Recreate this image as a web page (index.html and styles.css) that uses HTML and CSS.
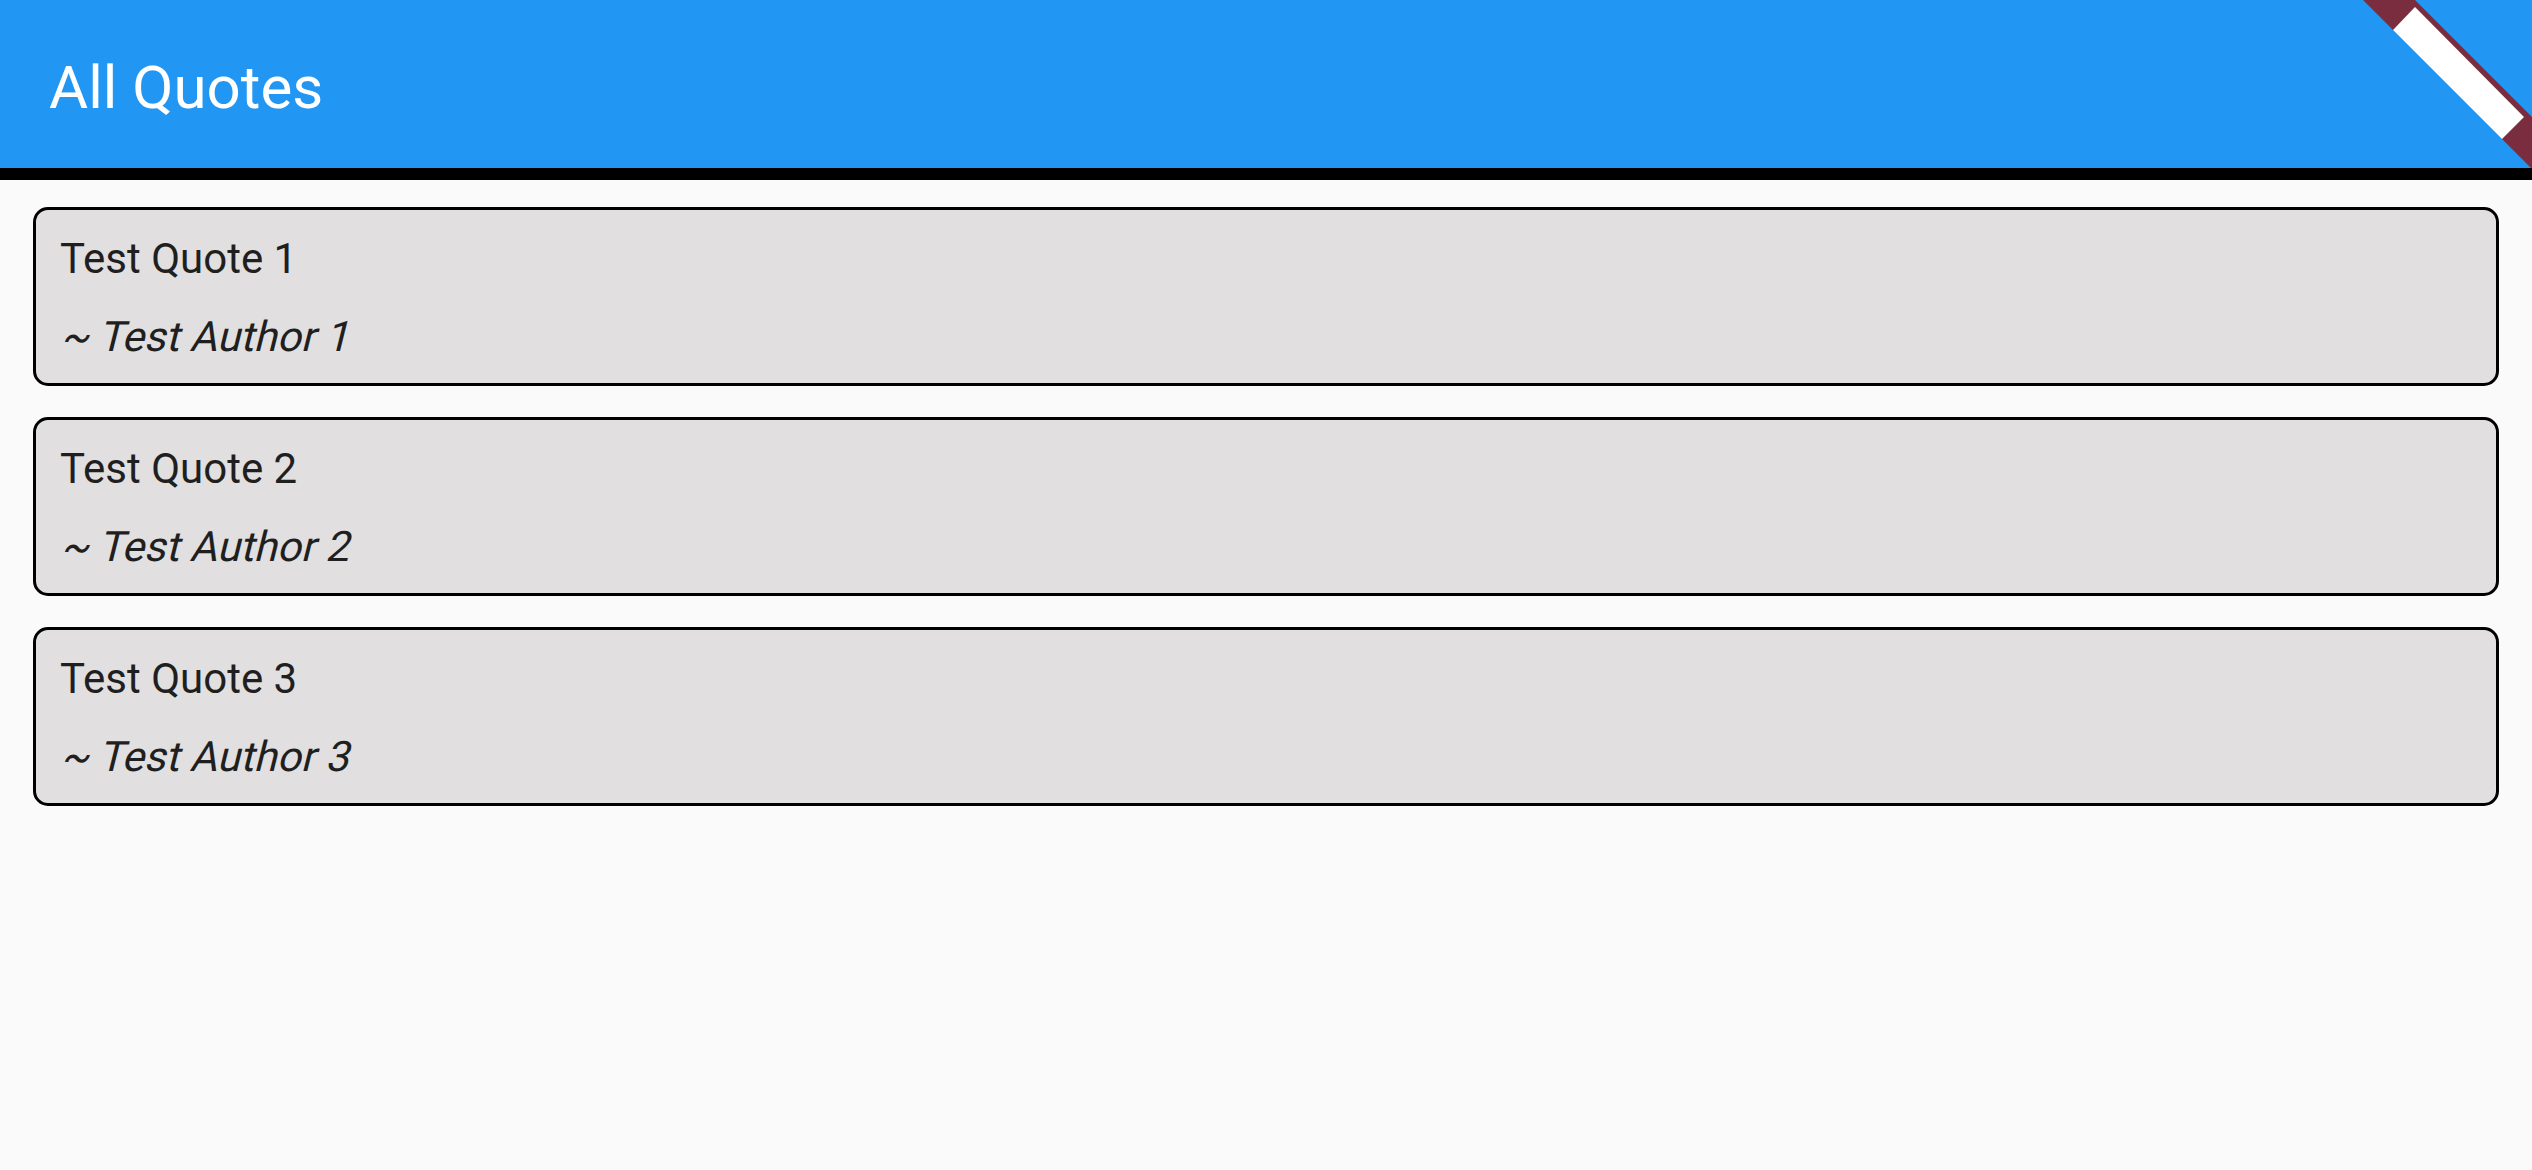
FILE: index.html
```html
<!DOCTYPE html>
<html lang="en">
<head>
<meta charset="utf-8">
<title>All Quotes</title>
<link rel="stylesheet" href="styles.css">
</head>
<body>
<header class="appbar">
  <h1 class="appbar-title">All Quotes</h1>
  <svg class="debug-banner" width="169" height="168" viewBox="0 0 169 168" aria-hidden="true">
    <polygon points="0,0 52,0 169,117 169,168 168,168" fill="#7B2D40"/>
    <polygon points="52,7 30,30 139,139 161,117" fill="#FFFFFF"/>
  </svg>
</header>
<div class="appbar-shadow"></div>
<main class="quote-list">
  <article class="quote-card">
    <p class="quote-text">Test Quote 1</p>
    <p class="quote-author"><span class="oblique">~ Test Author 1</span></p>
  </article>
  <article class="quote-card">
    <p class="quote-text">Test Quote 2</p>
    <p class="quote-author"><span class="oblique">~ Test Author 2</span></p>
  </article>
  <article class="quote-card">
    <p class="quote-text">Test Quote 3</p>
    <p class="quote-author"><span class="oblique">~ Test Author 3</span></p>
  </article>
</main>
</body>
</html>
```
FILE: styles.css
```css
html, body {
  margin: 0;
  padding: 0;
}

body {
  width: 2532px;
  height: 1170px;
  overflow: hidden;
  background: #FAFAFA;
  font-family: Roboto, "Liberation Sans", sans-serif;
}

.appbar {
  position: relative;
  height: 168px;
  background: #2196F3;
  display: flex;
  align-items: center;
  padding: 6px 0 0 49px;
  box-sizing: border-box;
  overflow: hidden;
}

.appbar-title {
  margin: 0;
  font-size: 60px;
  font-weight: 400;
  color: #FFFFFF;
  line-height: normal;
}

.debug-banner {
  position: absolute;
  top: 0;
  right: 0;
  display: block;
}

.appbar-shadow {
  height: 12px;
  background: #000000;
}

.quote-list {
  display: flex;
  flex-direction: column;
  gap: 31px;
  padding: 27px 33px 0 33px;
}

.quote-card {
  background: #E1DFE0;
  border: 3px solid #000000;
  border-radius: 15px;
  padding: 24px 24px 22px 24px;
  display: flex;
  flex-direction: column;
  gap: 29px;
}

.quote-text,
.quote-author {
  margin: 0;
  font-size: 42px;
  line-height: normal;
  color: #1F1F1F;
}

.oblique {
  display: inline-block;
  font-style: normal;
  transform: skewX(-14deg);
  transform-origin: 0 39px;
}
```
